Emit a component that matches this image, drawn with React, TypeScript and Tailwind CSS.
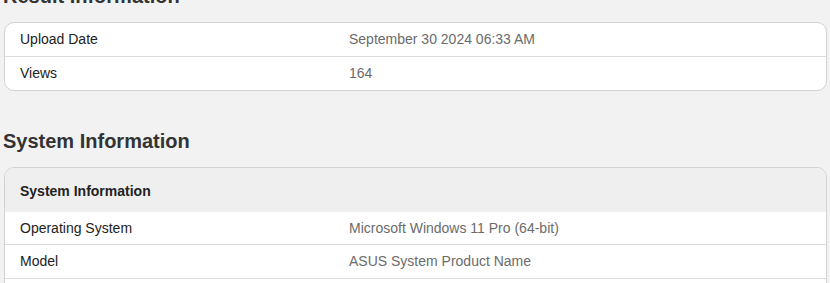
const result = [
  { label: "Upload Date", value: "September 30 2024 06:33 AM" },
  { label: "Views", value: "164" },
];

const system = [
  { label: "Operating System", value: "Microsoft Windows 11 Pro (64-bit)" },
  { label: "Model", value: "ASUS System Product Name" },
  { label: "Motherboard", value: "ASUSTeK COMPUTER INC. PRIME B650M-A" },
  { label: "Power Plan", value: "Balanced" },
];

function Row({ label, value }: { label: string; value: string }) {
  return (
    <div className="flex border-b border-[#dcdcdc] last:border-b-0 h-[34px] last:h-[33px] items-center">
      <div className="w-[344px] shrink-0 pl-[15px] text-[#222]">{label}</div>
      <div className="flex-1 text-[#6b6b6b]">{value}</div>
    </div>
  );
}

export default function App() {
  return (
    <div
      className="min-h-screen bg-[#f2f2f2] pl-[4px] pr-[3px] text-[14px] overflow-hidden"
      style={{ fontFamily: '"Liberation Sans", Arial, sans-serif' }}
    >
      <div className="mt-[-19px]">
        <h2 className="-ml-px text-[20px] leading-[30px] font-bold text-[#333] mb-[11px]">Result Information</h2>
        <div className="bg-white border border-[#d2d2d2] rounded-[10px] overflow-hidden">
          {result.map((r) => (
            <Row key={r.label} {...r} />
          ))}
        </div>

        <h2 className="-ml-px text-[20px] leading-[30px] font-bold text-[#333] mt-[35px] mb-[11px]">System Information</h2>
        <div className="bg-white border border-[#d2d2d2] rounded-[10px] overflow-hidden">
          <div className="h-[44px] flex items-center pt-[2px] bg-[#efefef] pl-[15px] font-bold text-[#222]">
            System Information
          </div>
          <div className="[&>div:first-child]:h-[33px]">
            {system.map((r) => (
              <Row key={r.label} {...r} />
            ))}
          </div>
        </div>
      </div>
    </div>
  );
}
